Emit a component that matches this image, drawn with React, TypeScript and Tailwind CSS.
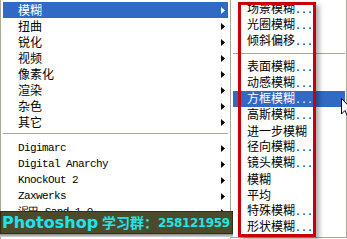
import React from "react";

const cjk = "font-['SimSun','Noto_Sans_CJK_SC',sans-serif]";
const mono = "font-['Liberation_Mono',monospace]";

type Item = { label: string; dots?: boolean; latin?: boolean; arrow?: boolean; active?: boolean } | "sep";

const leftItems: Item[] = [
  { label: "模糊", arrow: true, active: true },
  { label: "扭曲", arrow: true },
  { label: "锐化", arrow: true },
  { label: "视频", arrow: true },
  { label: "像素化", arrow: true },
  { label: "渲染", arrow: true },
  { label: "杂色", arrow: true },
  { label: "其它", arrow: true },
  "sep",
  { label: "Digimarc", latin: true, arrow: true },
  { label: "Digital Anarchy", latin: true, arrow: true },
  { label: "KnockOut 2", latin: true, arrow: true },
  { label: "Zaxwerks", latin: true, arrow: true },
  { label: "泥巴 Sand 1.0", latin: true, arrow: true },
];

const subItems: Item[] = [
  { label: "场景模糊", dots: true },
  { label: "光圈模糊", dots: true },
  { label: "倾斜偏移", dots: true },
  "sep",
  { label: "表面模糊", dots: true },
  { label: "动感模糊", dots: true },
  { label: "方框模糊", dots: true, active: true },
  { label: "高斯模糊", dots: true },
  { label: "进一步模糊" },
  { label: "径向模糊", dots: true },
  { label: "镜头模糊", dots: true },
  { label: "模糊" },
  { label: "平均" },
  { label: "特殊模糊", dots: true },
  { label: "形状模糊", dots: true },
];

// - small black/white triangle for submenus
const Arrow = ({ white }: { white?: boolean }) => (
  <svg width="4" height="7" viewBox="0 0 4 7" className="shrink-0">
    <path d="M0 0 L4 3.5 L0 7 Z" fill={white ? "#ffffff" : "#000000"} />
  </svg>
);

const Row = ({ item, pl }: { item: Exclude<Item, "sep">; pl: string }) => (
  <div
    className={`flex h-[16px] items-center pr-[2px] ${pl} ${
      item.active ? "bg-[#316ac5] text-white" : "text-black"
    }`}
  >
    <div className="flex flex-1 items-baseline whitespace-nowrap leading-[14px]">
      {item.latin ? (
        <span className={`${mono} text-[11px] leading-[14px] tracking-[-0.6px]`}>{item.label}</span>
      ) : (
        <span className={`${cjk} text-[12px] leading-[14px]`}>{item.label}</span>
      )}
      {item.dots && <span className={`${mono} text-[10px] leading-[14px]`}>...</span>}
    </div>
    {item.arrow && <Arrow white={item.active} />}
  </div>
);

export default function App() {
  return (
    <div className="relative h-[239px] w-[347px] overflow-hidden bg-white">
      <div className="flex h-full">
        {/*// - main filter menu */}
        <div className="flex h-full w-[231px] flex-col border-x border-[#aca899] px-[2px] pt-[2px]">
          {leftItems.map((it, i) =>
            it === "sep" ? (
              <div key={i} className="h-[10px] pt-[3px]">
                <div className="h-px bg-[#aca899]" />
              </div>
            ) : (
              <Row key={i} item={it} pl="pl-[15px] pr-[3px]" />
            )
          )}
        </div>

        {/*// - blur submenu */}
        <div className="flex h-[238px] flex-1 flex-col border-b border-r border-[#aca899] pl-[2px] pr-[1px] pt-[1px]">
          {subItems.map((it, i) =>
            it === "sep" ? (
              <div key={i} className="h-[10px] pt-[4px]">
                <div className="h-px bg-[#aca899]" />
              </div>
            ) : (
              <Row key={i} item={it} pl="pl-[14px]" />
            )
          )}
        </div>
      </div>

      {/*// - banner over the menu */}
      <div className="absolute left-0 top-[211px] w-[233px]">
        <div className="flex h-[23px] items-center border border-[#2e2e18] bg-[#4b4b2b] pl-[1px] whitespace-nowrap font-bold text-[#1de4ee]">
          <span className="font-['DejaVu_Sans',sans-serif] text-[16px]">Photoshop</span>
          <span className={`${cjk} ml-[4px] text-[14px]`}>学习群：</span>
          <span className="font-['DejaVu_Sans',sans-serif] text-[12px] tracking-[-0.4px]">258121959</span>
        </div>
        <div className="h-[3px] bg-gradient-to-b from-[#8a8a8a] to-[#d8d8d8]" />
      </div>

      {/*// - red annotation box */}
      <div className="absolute left-[238px] top-[2px] h-[235px] w-[78px] border-[3px] border-[#c8000a] shadow-[3px_3px_5px_rgba(0,0,0,0.35)]" />

      {/*// - mouse pointer */}
      <svg className="absolute left-[341px] top-[98px]" width="12" height="20" viewBox="0 0 12 20">
        <path d="M0.5 0.5 L0.5 16 L4 12.5 L6.5 18.5 L8.5 17.5 L6 11.5 L11 11.5 Z" fill="#fff" stroke="#000" strokeWidth="1" />
      </svg>
    </div>
  );
}
